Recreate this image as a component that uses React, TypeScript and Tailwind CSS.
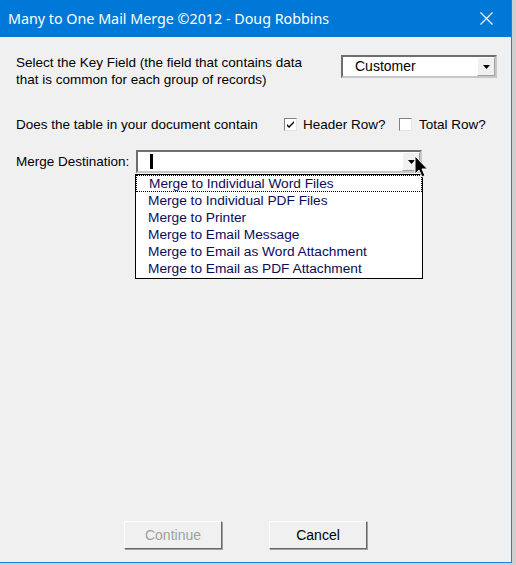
import React from 'react';

const tahoma = { fontFamily: '"Liberation Sans", Arial, sans-serif' };

const DropArrow: React.FC = () => (
  <div className="w-[18px] h-full bg-[#f0f0f0] border-t border-l border-white border-r border-b border-r-[#a0a0a0] border-b-[#a0a0a0] flex items-center justify-center">
    <svg width="7" height="4" viewBox="0 0 7 4">
      <path d="M0 0h7L3.5 4z" fill="#000" />
    </svg>
  </div>
);

const Check: React.FC<{ checked?: boolean }> = ({ checked }) => (
  <div className="w-[13px] h-[13px] bg-white border border-t-[#808080] border-l-[#808080] border-r-[#e3e3e3] border-b-[#e3e3e3] flex items-center justify-center">
    {checked && (
      <svg width="9" height="9" viewBox="0 0 9 9">
        <path d="M1 4l2 2 5-5v2l-5 5-2-2z" fill="#000" />
      </svg>
    )}
  </div>
);

const options = [
  'Merge to Individual Word Files',
  'Merge to Individual PDF Files',
  'Merge to Printer',
  'Merge to Email Message',
  'Merge to Email as Word Attachment',
  'Merge to Email as PDF Attachment',
];

const App: React.FC = () => {
  return (
    <div className="w-[516px] h-[565px] bg-[#cfcfcf] overflow-hidden">
      <div className="w-[512px] h-[563px] bg-[#f0f0f0] border-r border-b border-[#1a83d8] flex flex-col">
        {/* title bar */}
        <div className="h-[37px] bg-[#0078d7] flex items-center justify-between pl-[8px] pr-[18px] text-white">
          <span className="text-[14.3px]" style={{ fontFamily: '"Noto Sans", "Open Sans", sans-serif' }}>
            Many to One Mail Merge ©2012 - Doug Robbins
          </span>
          <svg width="13" height="13" viewBox="0 0 13 13">
            <path d="M0.5 0.5l12 12M12.5 0.5l-12 12" stroke="#fff" strokeWidth="1.2" />
          </svg>
        </div>

        <div className="flex-1 flex flex-col text-[13.5px] text-black leading-[17px]" style={tahoma}>
          <div className="flex justify-between pl-[16px] pr-[14px] pt-[17px]">
            <p className="w-[300px]">
              Select the Key Field (the field that contains data that is common for each group of records)
            </p>
            <div className="mt-[1px] w-[156px] h-[23px] bg-white border-2 border-t-[#6e6e6e] border-l-[#6e6e6e] border-r-[#c8c8c8] border-b-[#c8c8c8] flex items-center justify-between pl-[12px] text-[14px]">
              <span>Customer</span>
              <DropArrow />
            </div>
          </div>

          <div className="flex items-center pl-[16px] mt-[28px]">
            <span className="w-[268px]">Does the table in your document contain</span>
            <Check checked />
            <span className="ml-[6px] w-[96px]">Header Row?</span>
            <Check />
            <span className="ml-[7px]">Total Row?</span>
          </div>

          <div className="flex items-center pl-[16px] mt-[17px]">
            <span className="w-[120px]">Merge Destination:</span>
            <div className="relative w-[286px] h-[23px]">
              <div className="w-full h-full bg-white border-2 border-t-[#6e6e6e] border-l-[#6e6e6e] border-r-[#c8c8c8] border-b-[#c8c8c8] flex items-center justify-between pl-[12px]">
                <div className="w-[3px] h-[15px] bg-black" />
                <DropArrow />
              </div>
              <div className="absolute left-[-1px] top-[24px] w-[288px] bg-white border border-black text-[#0a0a5a] text-[13.7px] leading-[17px] pb-[1px]">
                {options.map((o, i) => (
                  <div
                    key={o}
                    className={`pl-[12px] h-[17px] ${i === 0 ? 'border border-dotted border-black pl-[11px] leading-[15px]' : ''}`}
                  >
                    {o}
                  </div>
                ))}
              </div>
              {/* mouse pointer */}
              <svg className="absolute left-[278px] top-[5px]" width="14" height="24" viewBox="0 0 14 24">
                <path d="M1 1v18l4-4 3 7 3-1.5-3-6.5h5.5z" fill="#000" stroke="#fff" strokeWidth="1" />
              </svg>
            </div>
          </div>

          <div className="mt-auto flex justify-center gap-[47px] pb-[13px] pr-[20px]">
            <button className="w-[98px] h-[28px] bg-[#f0f0f0] border border-t-white border-l-white border-r-[#696969] border-b-[#696969] shadow-[1px_1px_0_#a0a0a0] text-[#a0a0a0] text-[14px]">
              Continue
            </button>
            <button className="w-[98px] h-[28px] bg-[#f0f0f0] border border-t-white border-l-white border-r-[#696969] border-b-[#696969] shadow-[1px_1px_0_#a0a0a0] text-black text-[14px]">
              Cancel
            </button>
          </div>
        </div>
      </div>
    </div>
  );
};

export default App;
